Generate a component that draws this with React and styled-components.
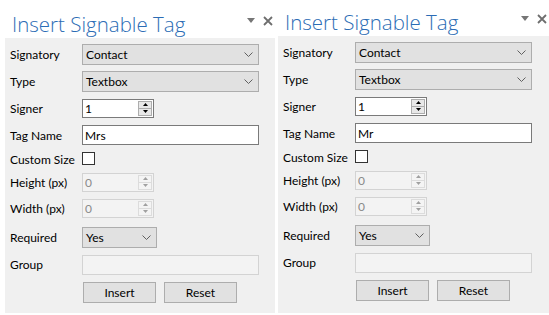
import React from 'react';
import styled, { createGlobalStyle } from 'styled-components';

const GlobalStyle = createGlobalStyle`
  html, body {
    margin: 0;
    padding: 0;
    background: #ffffff;
  }
  body {
    font-family: Lato, "Liberation Sans", sans-serif;
    font-size: 12px;
    color: #000000;
  }
`;

const Page = styled.div`
  display: flex;
  align-items: flex-start;
  width: 549px;
  height: 315px;
  overflow: hidden;
`;

const Pane = styled.section`
  flex: none;
  box-sizing: border-box;
  display: flex;
  flex-direction: column;
  width: ${p => p.$width}px;
  height: 313px;
  padding-left: ${p => p.$inset}px;
  padding-top: ${p => p.$top}px;
`;

const Header = styled.header`
  flex: none;
  height: 36px;
  display: flex;
  align-items: center;
  padding: 0 2px 2px 7px;
  box-sizing: border-box;
`;

const Title = styled.h1`
  flex: 1;
  align-self: flex-end;
  margin: 0;
  font-family: "Open Sans", "Noto Sans", sans-serif;
  font-weight: 300;
  font-size: 20.5px;
  line-height: 24px;
  color: #2b6cb5;
  white-space: nowrap;
`;

const HeaderIcons = styled.div`
  display: flex;
  align-items: center;
  gap: 8px;
  margin-top: 3px;
`;

const Body = styled.div`
  flex: 1;
  background: #f0f0f0;
  padding: 3px 0 0 5px;
  display: flex;
  flex-direction: column;
`;

const Row = styled.div`
  flex: none;
  height: ${p => p.$h}px;
  display: flex;
  align-items: center;
`;

const Label = styled.label`
  flex: none;
  width: 72px;
  white-space: nowrap;
  margin-top: ${p => (p.$low ? 3 : 0)}px;
`;

const Dropdown = styled.div`
  box-sizing: border-box;
  width: ${p => p.$w}px;
  height: 21px;
  border: 1px solid #adadad;
  background: #e1e1e1;
  display: flex;
  align-items: center;
  justify-content: space-between;
  padding: 0 5px 0 3px;
`;

const TextBox = styled.div`
  box-sizing: border-box;
  width: ${p => p.$w}px;
  height: 20px;
  border: 1px solid ${p => (p.$disabled ? '#d3d3d3' : '#7a7a7a')};
  background: ${p => (p.$disabled ? '#f3f3f3' : '#ffffff')};
  color: ${p => (p.$disabled ? '#8a8a8a' : '#000000')};
  display: flex;
  align-items: center;
  padding-left: 2px;
`;

const Spinner = styled(TextBox)`
  padding: 1px;
  padding-left: 2px;
  height: 19px;
  justify-content: space-between;
  align-items: stretch;
  line-height: 15px;
`;

const SpinValue = styled.span`
  display: flex;
  align-items: center;
`;

const SpinButtons = styled.div`
  width: 14px;
  display: flex;
  flex-direction: column;
`;

const SpinButton = styled.div`
  flex: 1;
  box-sizing: border-box;
  border: 1px solid ${p => (p.$disabled ? '#dcdcdc' : '#adadad')};
  background: ${p => (p.$disabled ? '#f4f4f4' : '#e8e8e8')};
  display: flex;
  align-items: center;
  justify-content: center;
  & + & {
    border-top: none;
  }
`;

const Check = styled.div`
  box-sizing: border-box;
  width: 13px;
  height: 13px;
  border: 1px solid #333333;
  background: #ffffff;
`;

const Buttons = styled.div`
  display: flex;
  gap: 8px;
  padding-left: 73px;
`;

const Button = styled.button`
  box-sizing: border-box;
  width: 73px;
  height: 21px;
  border: 1px solid #adadad;
  background: #e1e1e1;
  font: inherit;
  color: #000000;
  padding: 0;
`;

function Chevron() {
  return (
    <svg width="9" height="5" viewBox="0 0 9 5">
      <polyline points="0.5,0.5 4.5,4.5 8.5,0.5" fill="none" stroke="#606060" strokeWidth="1" />
    </svg>
  );
}

function Arrow({ up, disabled }) {
  return (
    <svg width="5" height="3" viewBox="0 0 5 3">
      <polygon
        points={up ? '0,3 2.5,0 5,3' : '0,0 2.5,3 5,0'}
        fill={disabled ? '#a0a0a0' : '#000000'}
      />
    </svg>
  );
}

function Spin({ value, disabled }) {
  return (
    <Spinner $w={72} $disabled={disabled}>
      <SpinValue>{value}</SpinValue>
      <SpinButtons>
        <SpinButton $disabled={disabled}><Arrow up disabled={disabled} /></SpinButton>
        <SpinButton $disabled={disabled}><Arrow disabled={disabled} /></SpinButton>
      </SpinButtons>
    </Spinner>
  );
}

function Select({ value, width }) {
  return (
    <Dropdown $w={width}>
      <span>{value}</span>
      <Chevron />
    </Dropdown>
  );
}

function TagPane({ width, inset, top, tagName }) {
  return (
    <Pane $width={width} $inset={inset} $top={top}>
      <Header>
        <Title>Insert Signable Tag</Title>
        <HeaderIcons>
          <svg width="8" height="5" viewBox="0 0 8 5">
            <polygon points="0,0 8,0 4,5" fill="#767676" />
          </svg>
          <svg width="10" height="10" viewBox="0 0 10 10">
            <path d="M1 1 L9 9 M9 1 L1 9" stroke="#6e6e6e" strokeWidth="1.8" />
          </svg>
        </HeaderIcons>
      </Header>
      <Body>
        <Row $h={26}><Label>Signatory</Label><Select value="Contact" width={177} /></Row>
        <Row $h={28}><Label>Type</Label><Select value="Textbox" width={177} /></Row>
        <Row $h={26}><Label>Signer</Label><Spin value="1" /></Row>
        <Row $h={28}><Label>Tag Name</Label><TextBox $w={177}>{tagName}</TextBox></Row>
        <Row $h={18}><Label $low>Custom Size</Label><Check /></Row>
        <Row $h={30}><Label>Height (px)</Label><Spin value="0" disabled /></Row>
        <Row $h={22}><Label>Width (px)</Label><Spin value="0" disabled /></Row>
        <Row $h={36}><Label>Required</Label><Select value="Yes" width={75} /></Row>
        <Row $h={19}><Label>Group</Label><TextBox $w={177} $disabled /></Row>
        <Row $h={36}>
          <Buttons>
            <Button>Insert</Button>
            <Button>Reset</Button>
          </Buttons>
        </Row>
      </Body>
    </Pane>
  );
}

export default function App() {
  return (
    <>
      <GlobalStyle />
      <Page>
        <TagPane width={275} inset={5} top={2} tagName="Mrs" />
        <TagPane width={274} inset={3} top={0} tagName="Mr" />
      </Page>
    </>
  );
}
